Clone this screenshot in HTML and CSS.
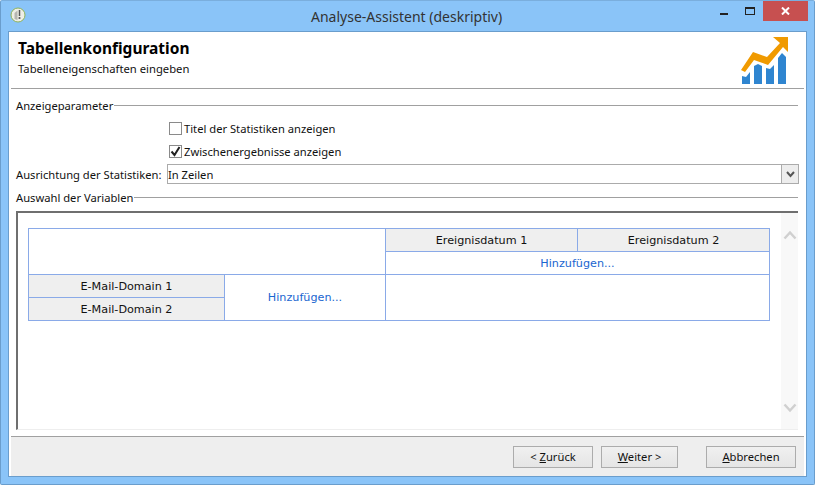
FILE: index.html
```html
<!DOCTYPE html>
<html>
<head>
    <title>Analyse-Assistent (deskriptiv)</title>
    <meta charset="utf-8">
    <link rel="stylesheet" href="styles.css">
</head>
<body>
    <div class="window">
        <div class="titlebar">
            <svg class="app-icon" width="16" height="16" viewBox="0 0 16 16">
                <circle cx="8" cy="8" r="7" fill="#eeeee6" stroke="#8fb35a" stroke-width="1"/>
                <path d="M4.500 6l3-2.500V13l-3-1z" fill="#b5b5b0"/>
                <path d="M9.500 3v6" stroke="#555" stroke-width="1.500" fill="none"/>
                <circle cx="9.500" cy="11" r="1.100" fill="#555"/>
            </svg>
            <div class="title">Analyse-Assistent (deskriptiv)</div>
            <div class="controls">
                <div class="ctl ctl-min"><span></span></div>
                <div class="ctl ctl-max"><span></span></div>
                <div class="ctl-close">
                    <svg width="9" height="8" viewBox="0 0 9 8"><path d="M1 .5l7 7M8 .5l-7 7" stroke="#fff" stroke-width="2" fill="none"/></svg>
                </div>
            </div>
        </div>

        <div class="client">
            <div class="header">
                <div>
                    <h1>Tabellenkonfiguration</h1>
                    <p>Tabelleneigenschaften eingeben</p>
                </div>
                <svg class="logo" width="49" height="48" viewBox="0 0 49 48">
                    <path d="M2 47V39l4 1 4-5v12z" fill="#2f85d0"/>
                    <path d="M14 47V29l4-2 4 2v18z" fill="#2f85d0"/>
                    <path d="M26 47V31l4 1 4-4v19z" fill="#2f85d0"/>
                    <path d="M38 47V21l4-5 4 4v27z" fill="#2f85d0"/>
                    <path d="M1 33L13 15l14 5L40 6l-7-6h15v15l-5-5-15 18-14-5-9 12z" fill="#f09a00"/>
                </svg>
            </div>

            <div class="form">
                <div class="legend"><span>Anzeigeparameter</span></div>
                <div class="check-row">
                    <span class="check"></span>
                    <label>Titel der Statistiken anzeigen</label>
                </div>
                <div class="check-row check-row2">
                    <span class="check">
                        <svg width="11" height="11" viewBox="0 0 11 11"><path d="M1.500 5.500l3 3.500 5-8" stroke="#222" stroke-width="2" fill="none"/></svg>
                    </span>
                    <label>Zwischenergebnisse anzeigen</label>
                </div>
                <div class="select-row">
                    <label>Ausrichtung der Statistiken:</label>
                    <div class="select">
                        <span class="select-value">In Zeilen</span>
                        <span class="select-btn">
                            <svg width="9" height="7" viewBox="0 0 9 7"><path d="M1 1l3.500 4L8 1" stroke="#555" stroke-width="2" fill="none"/></svg>
                        </span>
                    </div>
                </div>
                <div class="legend legend2"><span>Auswahl der Variablen</span></div>

                <div class="panel">
                    <div class="panel-inner">
                        <table class="pivot">
                            <colgroup>
                                <col class="c1"><col class="c2"><col class="c3"><col class="c4">
                            </colgroup>
                            <tr>
                                <td colspan="2" rowspan="2"></td>
                                <th>Ereignisdatum 1</th>
                                <th>Ereignisdatum 2</th>
                            </tr>
                            <tr>
                                <td colspan="2" class="add">Hinzufügen...</td>
                            </tr>
                            <tr>
                                <th>E-Mail-Domain 1</th>
                                <td rowspan="2" class="add">Hinzufügen...</td>
                                <td colspan="2" rowspan="2"></td>
                            </tr>
                            <tr>
                                <th>E-Mail-Domain 2</th>
                            </tr>
                        </table>
                    </div>
                    <div class="scrollbar">
                        <svg width="14" height="10" viewBox="0 0 14 10"><path d="M1.500 8.500L7 2.500l5.500 6" stroke="#d0d0d0" stroke-width="2.500" fill="none"/></svg>
                        <svg width="14" height="10" viewBox="0 0 14 10"><path d="M1.500 1.500L7 7.500l5.500-6" stroke="#d0d0d0" stroke-width="2.500" fill="none"/></svg>
                    </div>
                </div>
            </div>

            <div class="footer">
                <button class="btn btn-back">&lt; <u>Z</u>urück</button>
                <button class="btn btn-next"><u>W</u>eiter &gt;</button>
                <button class="btn btn-cancel"><u>A</u>bbrechen</button>
            </div>
        </div>
    </div>
</body>
</html>
```

FILE: styles.css
```css
body {
    margin: 0;
    background: #fff;
    font-family: "Noto Sans", "Open Sans", sans-serif;
    font-size: 11px;
    color: #111;
}
.window {
    width: 815px;
    height: 485px;
    box-sizing: border-box;
    background: #8ac4f8;
    border: 1px solid #6a9dcc;
    border-top-color: #7aaedd;
    border-radius: 2px;
    display: flex;
    flex-direction: column;
    padding: 0 7px 7px 7px;
}
.titlebar {
    height: 30px;
    flex: none;
    display: flex;
    align-items: center;
    position: relative;
}
.app-icon {
    margin-left: 2px;
    margin-top: -2px;
}
.title {
    position: absolute;
    left: 303px;
    top: 6px;
    font-size: 14px;
    color: #333;
    white-space: nowrap;
}
.controls {
    margin-left: auto;
    display: flex;
    align-self: flex-start;
    margin-right: -1px;
}
.ctl {
    width: 26px;
    height: 20px;
    display: flex;
    justify-content: center;
}
.ctl-min span {
    width: 8px;
    height: 2px;
    background: #222;
    margin-top: 12px;
}
.ctl-max span {
    width: 8px;
    height: 5px;
    border: 1px solid #222;
    border-top-width: 2px;
    margin-top: 6px;
}
.ctl-close {
    width: 45px;
    height: 20px;
    background: #c75050;
    display: flex;
    align-items: center;
    justify-content: center;
}
.client {
    flex: 1;
    background: #fff;
    border: 1px solid #6a9dcc;
    display: flex;
    flex-direction: column;
    min-height: 0;
}
.header {
    height: 56px;
    flex: none;
    margin: 0 2px;
    padding: 0 7px;
    border-bottom: 1px solid #a0a0a0;
    display: flex;
    justify-content: space-between;
}
h1 {
    margin: 6px 0 0 0;
    font-size: 15.500px;
    line-height: 20px;
    font-weight: bold;
    color: #000;
}
p {
    margin: 3px 0 0 0;
    font-size: 11.250px;
    line-height: 15px;
}
.logo {
    margin: 5px 8px 0 0;
}
.form {
    flex: 1;
    padding: 0 8px 0 7px;
    min-height: 0;
    display: flex;
    flex-direction: column;
    font-size: 11.200px;
}
.legend {
    display: flex;
    align-items: center;
    height: 16px;
    margin-top: 9px;
}
.legend::after {
    content: "";
    flex: 1;
    height: 1px;
    background: #a0a0a0;
    margin-left: 1px;
}
.check-row {
    display: flex;
    align-items: center;
    height: 16px;
    margin: 7px 0 0 153px;
}
.check {
    width: 11px;
    height: 11px;
    border: 1px solid #8a8a8a;
    margin-right: 2px;
    display: flex;
}
.select-row {
    display: flex;
    align-items: center;
    height: 20px;
    margin-top: 5px;
}
.select-row label {
    width: 151px;
    flex: none;
}
.select {
    flex: 1;
    margin-right: -1px;
    height: 18px;
    border: 1px solid #ababab;
    display: flex;
    align-items: center;
}
.select-value {
    flex: 1;
}
.select-btn {
    width: 16px;
    height: 18px;
    background: #ededed;
    border-left: 1px solid #ababab;
    display: flex;
    align-items: center;
    justify-content: center;
}
.legend2 {
    margin-top: 5px;
}
.panel {
    margin-top: 6px;
    height: 219px;
    flex: none;
    border-top: 2px solid #6f6f6f;
    border-left: 2px solid #6f6f6f;
    border-bottom: 1px solid #eee;
    box-sizing: border-box;
    display: flex;
}
.panel-inner {
    flex: 1;
    padding: 15px 10px 0 10px;
}
.pivot {
    border-collapse: collapse;
    table-layout: fixed;
    width: 742px;
    font-family: "DejaVu Sans", sans-serif;
    font-size: 11.200px;
}
.pivot td, .pivot th {
    border: 1px solid #8aaae8;
    height: 22px;
    padding: 0;
    text-align: center;
    font-weight: normal;
    color: #111;
}
.pivot th {
    background: #efefef;
}
.pivot .add {
    color: #1a66d0;
}
.c1 { width: 196px; }
.c2 { width: 161px; }
.c3 { width: 192px; }
.c4 { width: 192px; }
.scrollbar {
    width: 17px;
    background: #f8f8f8;
    display: flex;
    flex-direction: column;
    justify-content: space-between;
    align-items: center;
    padding: 17px 0 16px 0;
}
.footer {
    flex: none;
    height: 39px;
    margin: 6px 2px 0 2px;
    background: #eee;
    border-top: 1px solid #a0a0a0;
    display: flex;
    align-items: center;
    padding: 0 8px 0 0;
}
.btn {
    height: 22px;
    padding: 0;
    border: 1px solid #acacac;
    background: linear-gradient(#f0f0f0, #e5e5e5);
    font-family: "Noto Sans", sans-serif;
    font-size: 11.200px;
    color: #111;
}
.btn-back {
    width: 80px;
    margin-left: auto;
}
.btn-next {
    width: 77px;
    margin-left: 8px;
}
.btn-cancel {
    width: 90px;
    margin-left: 28px;
}
```
